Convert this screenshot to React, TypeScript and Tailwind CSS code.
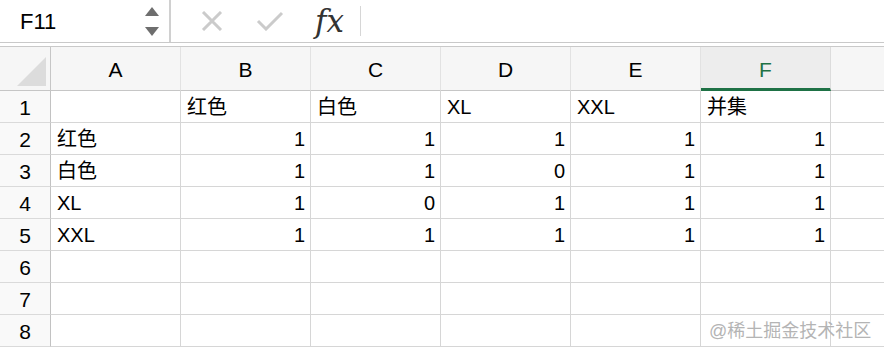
import React from "react"

const cols = ["A", "B", "C", "D", "E", "F"]

type Cell = string | number | null

const data: Cell[][] = [
  [null, "红色", "白色", "XL", "XXL", "并集"],
  ["红色", 1, 1, 1, 1, 1],
  ["白色", 1, 1, 0, 1, 1],
  ["XL", 1, 0, 1, 1, 1],
  ["XXL", 1, 1, 1, 1, 1],
  [null, null, null, null, null, null],
  [null, null, null, null, null, null],
  [null, null, null, null, null, null],
]

const font = { fontFamily: '"Liberation Sans", "Noto Sans CJK SC", sans-serif' }

function Toolbar() {
  return (
    <div className="flex h-[43px] border-b border-[#c9c9c9] bg-white">
      <div className="flex w-[171px] items-center justify-between border-r-2 border-[#d0d0d0] pl-[20px] pr-[10px]">
        <span className="text-[22px] text-black">F11</span>
        <div className="flex flex-col gap-[11px]">
          <svg width="14" height="9" viewBox="0 0 14 9">
            <polygon points="7,0 14,9 0,9" fill="#6e6e6e" />
          </svg>
          <svg width="14" height="9" viewBox="0 0 14 9">
            <polygon points="0,0 14,0 7,9" fill="#6e6e6e" />
          </svg>
        </div>
      </div>
      <div className="flex items-center pl-[29px]">
        <svg width="24" height="20" viewBox="0 0 24 20">
          <path d="M3 1 L21 19 M21 1 L3 19" stroke="#cbcbcb" strokeWidth="3" />
        </svg>
        <svg className="ml-[32px]" width="28" height="20" viewBox="0 0 28 20">
          <path d="M2 10 L10 18 L26 2" stroke="#cbcbcb" strokeWidth="3" fill="none" />
        </svg>
        <span
          className="ml-[31px] text-[31px] italic leading-none text-[#333333]"
          style={{ fontFamily: '"DejaVu Serif", serif' }}
        >
          fx
        </span>
        <div className="ml-[16px] h-[30px] w-px bg-[#d6d6d6]" />
      </div>
    </div>
  )
}

export default function App() {
  return (
    <div className="relative h-[354px] w-[884px] overflow-hidden bg-white" style={font}>
      <Toolbar />
      <div className="h-[3px]" />
      <div className="grid grid-cols-[51px_repeat(6,130px)_1fr] border-t border-[#c9c9c9]">
        <div className="relative h-[44px] border-b border-r border-[#c6c6c6] bg-[#f6f6f6]">
          <svg className="absolute left-0 top-0" width="50" height="44" viewBox="0 0 50 44">
            <polygon points="46,10 17,39 46,39" fill="#dcdcdc" />
          </svg>
        </div>
        {cols.map((c) => (
          <div
            key={c}
            className={
              c === "F"
                ? "flex h-[44px] items-center justify-center border-b-[3px] border-r border-b-[#1e7145] border-r-[#dcdcdc] bg-[#ededed] pt-[4px] text-[21px] text-[#1e7145]"
                : "flex h-[44px] items-center justify-center border-b border-r border-b-[#c6c6c6] border-r-[#e2e2e2] bg-[#f6f6f6] pt-[3px] text-[21px] text-black"
            }
          >
            {c}
          </div>
        ))}
        <div className="h-[44px] border-b border-[#c6c6c6] bg-[#f6f6f6]" />
        {data.map((row, r) => (
          <React.Fragment key={r}>
            <div className="flex h-[32px] items-end justify-center border-b border-r border-b-[#dadada] border-r-[#c2c2c2] bg-[#f9f9f9] pb-[2px] text-[21px] leading-[24px] text-black">
              {r + 1}
            </div>
            {row.map((v, i) => (
              <div
                key={i}
                className={
                  typeof v === "number"
                    ? "flex h-[32px] items-end justify-end border-b border-r border-[#d6d6d6] pb-[3px] pr-[5px] text-[20px] leading-[24px] text-black"
                    : "flex h-[32px] items-end justify-start border-b border-r border-[#d6d6d6] pb-[3px] pl-[6px] text-[20px] leading-[24px] text-black"
                }
              >
                {v}
              </div>
            ))}
            <div className="h-[32px] border-b border-[#d6d6d6]" />
          </React.Fragment>
        ))}
      </div>
      <div className="absolute left-[709px] top-[318px] text-[18px] text-[#b4b4b4]">@稀土掘金技术社区</div>
    </div>
  )
}
